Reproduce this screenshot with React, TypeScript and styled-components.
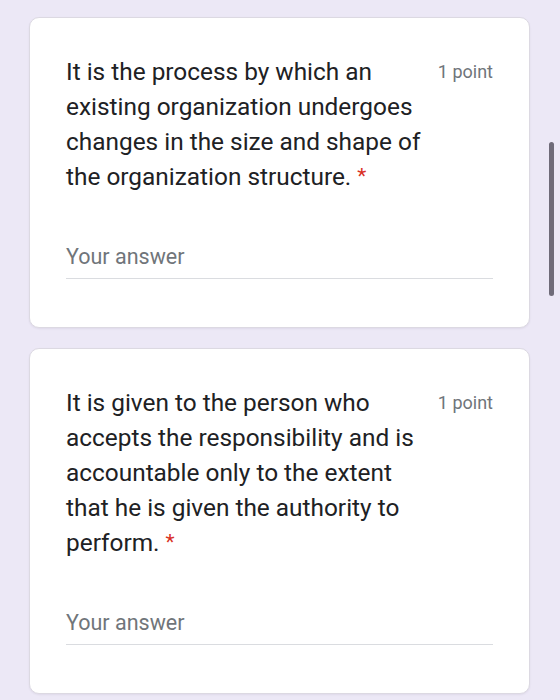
import React from "react";
import styled, { createGlobalStyle } from "styled-components";

const GlobalStyle = createGlobalStyle`
  html, body {
    margin: 0;
    padding: 0;
    background: #ece8f6;
  }
  body {
    font-family: Roboto, "Liberation Sans", Arial, sans-serif;
  }
`;

const Page = styled.div`
  position: relative;
  width: 560px;
  min-height: 700px;
  box-sizing: border-box;
  padding: 17px 30px 20px 29px;
  display: flex;
  flex-direction: column;
  gap: 20px;
  background: #ece8f6;
  overflow: hidden;
`;

const Card = styled.div`
  background: #ffffff;
  border: 1px solid #dcd9e2;
  border-radius: 10px;
  box-shadow: 0 1px 2px rgba(60, 50, 90, 0.08);
  padding: 36px 36px 48px 36px;
  display: flex;
  flex-direction: column;
  gap: 51px;
`;

const QuestionRow = styled.div`
  display: flex;
  justify-content: space-between;
  align-items: flex-start;
  gap: 16px;
`;

const QuestionText = styled.div`
  font-family: Roboto, "Liberation Sans", Arial, sans-serif;
  font-size: 24.4px;
  line-height: 35px;
  color: #202124;
  white-space: nowrap;
`;

const Line = styled.span`
  display: block;
  height: 35px;
`;

const Required = styled.span`
  color: #d93025;
  margin-left: 6px;
  font-size: 21px;
  line-height: 0;
  vertical-align: 2px;
`;

const Points = styled.div`
  font-family: Roboto, "Liberation Sans", Arial, sans-serif;
  font-size: 18px;
  line-height: 35px;
  color: #70757a;
  white-space: nowrap;
  flex-shrink: 0;
`;

const AnswerField = styled.div`
  height: 33px;
  border-bottom: 1px solid #dadce0;
  font-family: Roboto, "Liberation Sans", Arial, sans-serif;
  font-size: 21.5px;
  line-height: 24px;
  color: #70757a;
`;

const ScrollThumb = styled.div`
  position: absolute;
  top: 142px;
  right: 6px;
  width: 5px;
  height: 154px;
  border-radius: 3px;
  background: #6f6b79;
`;

type Question = { lines: string[]; points: string };

const questions: Question[] = [
  {
    lines: [
      "It is the process by which an",
      "existing organization undergoes",
      "changes in the size and shape of",
      "the organization structure.",
    ],
    points: "1 point",
  },
  {
    lines: [
      "It is given to the person who",
      "accepts the responsibility and is",
      "accountable only to the extent",
      "that he is given the authority to",
      "perform.",
    ],
    points: "1 point",
  },
];

export default function App() {
  return (
    <>
      <GlobalStyle />
      <Page>
        {questions.map((q, i) => (
          <Card key={i}>
            <QuestionRow>
              <QuestionText>
                {q.lines.map((l, j) => (
                  <Line key={j}>
                    {l}
                    {j === q.lines.length - 1 && <Required>*</Required>}
                  </Line>
                ))}
              </QuestionText>
              <Points>{q.points}</Points>
            </QuestionRow>
            <AnswerField>Your answer</AnswerField>
          </Card>
        ))}
        <ScrollThumb />
      </Page>
    </>
  );
}
